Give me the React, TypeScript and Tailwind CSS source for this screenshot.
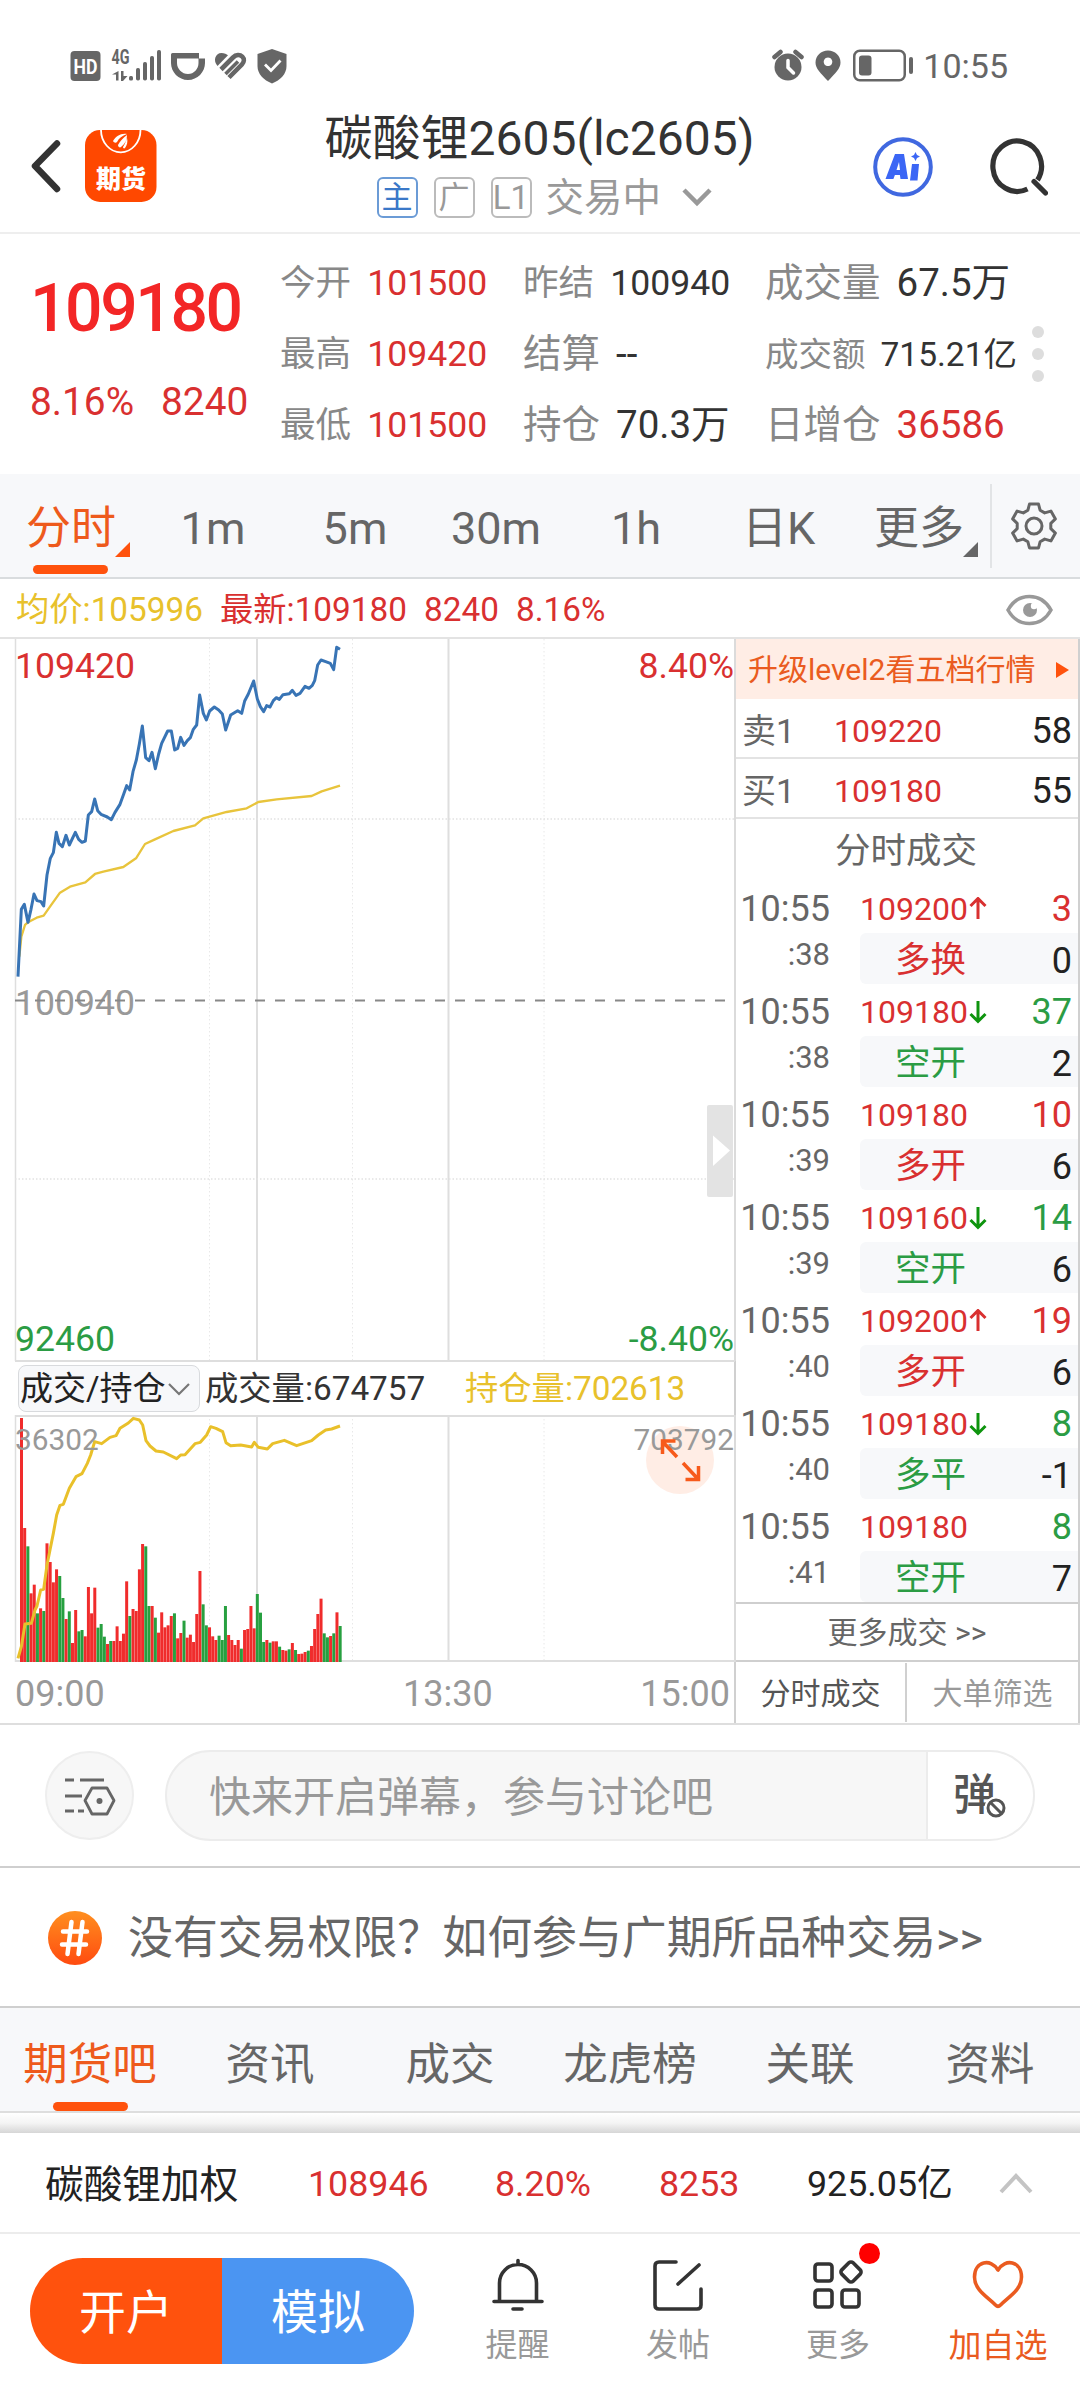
import React from 'react';
import clsx from 'clsx';

const stats = [
  [
    { label: '今开', value: '101500', up: true },
    { label: '最高', value: '109420', up: true },
    { label: '最低', value: '101500', up: true },
  ],
  [
    { label: '昨结', value: '100940' },
    { label: '结算', value: '--', size: 'big' },
    { label: '持仓', value: '70.3万', size: 'big' },
  ],
  [
    { label: '成交量', value: '67.5万', size: 'big' },
    { label: '成交额', value: '715.21亿', size: 'small' },
    { label: '日增仓', value: '36586', up: true, size: 'big' },
  ],
];

const trades = [
  { sec: ':38', price: '109200', dir: 'up', vol: '3', volUp: true, type: '多换', typeUp: true, delta: '0' },
  { sec: ':38', price: '109180', dir: 'down', vol: '37', volUp: false, type: '空开', typeUp: false, delta: '2' },
  { sec: ':39', price: '109180', dir: '', vol: '10', volUp: true, type: '多开', typeUp: true, delta: '6' },
  { sec: ':39', price: '109160', dir: 'down', vol: '14', volUp: false, type: '空开', typeUp: false, delta: '6' },
  { sec: ':40', price: '109200', dir: 'up', vol: '19', volUp: true, type: '多开', typeUp: true, delta: '6' },
  { sec: ':40', price: '109180', dir: 'down', vol: '8', volUp: false, type: '多平', typeUp: false, delta: '-1' },
  { sec: ':41', price: '109180', dir: '', vol: '8', volUp: false, type: '空开', typeUp: false, delta: '7' },
];

const boardTabs = ['期货吧', '资讯', '成交', '龙虎榜', '关联', '资料'];

// Chart series are stored at 3x plot resolution
const priceLine =
  '54,1220 64,1018 73,1003 84,1057 93,1018 102,972 111,992 123,995 131,1008 141,915 151,865 160,848 169,787 177,820 187,830 198,796 208,825 226,787 236,808 246,817 256,813 265,735 275,725 284,687 293,722 303,733 322,741 334,749 345,727 360,703 372,670 380,647 389,660 399,605 409,570 418,522 427,468 437,563 447,572 456,547 466,596 476,552 485,520 503,483 514,483 524,540 533,535 542,502 552,526 562,512 571,503 580,478 590,465 599,375 610,430 619,450 629,423 643,411 656,420 667,432 677,480 692,435 713,422 725,430 734,393 745,372 761,333 772,387 781,410 791,425 800,407 810,411 820,392 829,383 838,388 849,374 868,371 877,361 888,376 900,370 915,349 927,355 937,346 944,332 953,285 963,270 977,275 991,280 1001,299 1010,232 1020,238';

const averageLine =
  '58,1160 64,1100 75,1065 84,1057 110,1043 131,1037 150,1010 180,968 210,950 256,937 285,912 310,905 370,891 408,865 435,822 465,808 520,783 585,766 610,745 680,726 740,715 775,696 830,688 935,678 965,664 1020,647';

const positionLine =
  '54,1015 64,980 75,912 94,910 105,870 111,858 122,810 131,808 141,735 150,690 160,640 170,585 180,556 190,553 208,505 228,470 246,461 262,430 272,405 284,365 305,371 330,352 348,347 360,325 385,309 400,295 418,300 428,315 438,362 450,378 468,393 490,396 530,416 542,405 555,404 585,371 601,367 620,345 632,320 648,325 668,335 678,368 692,377 722,375 755,381 763,367 775,382 802,387 818,371 853,361 890,377 935,362 955,345 977,330 995,327 1020,318';

const volumeBars =
  '294R 624R 679G 820R 794R 880G 865R 873G 670R 726R 787R 748R 768G 834G 897R 874G 969R 870R 934G 930G 949R 801R 880R 803R 923G 912G 950G 972R 963G 963R 919R 963R 941R 784R 888G 867R 873R 748R 672R 679G 858G 858R 893G 938R 877R 922R 916R 888R 880G 955R 939R 902G 953R 944R 966R 882R 753R 853G 916G 922R 949R 960R 947G 960G 858G 945R 960R 975R 960R 986G 930R 927R 858R 925R 822G 878G 966G 960R 968G 964R 964R 980G 990R 992R 988G 969R 990G 1002R 1001R 996R 992G 978R 927R 882R 836R 940G 952G 948R 940G 877R 918G'
    .split(' ')
    .map((bar) => ({ top: parseInt(bar, 10), up: bar.endsWith('R') }));

const StatusBar = () => (
  <div className="flex h-[105px] items-start justify-between pt-[49px] pl-[70px] pr-[72px] text-[#666]">
    <svg className="overflow-visible" width="218" height="34" viewBox="70 49 218 34" fill="currentColor">
      <rect x="70.5" y="51" width="30" height="30" rx="4" />
      <text x="85.5" y="73.5" fontSize="20" fontWeight="700" fill="#fff" textAnchor="middle" textLength="24" lengthAdjust="spacingAndGlyphs">HD</text>
      <text x="111.500" y="63.500" fontSize="19.500" fontWeight="700" textLength="18" lengthAdjust="spacingAndGlyphs">4G</text>
      <path d="M118.500 71v9.500h-2.500v-6h-4zM121 71h2.500v5h4l-4.500 5h-2z" />
      <rect x="129" y="76" width="4" height="4.500" rx="1.500" />
      <rect x="136" y="68" width="4" height="12.500" rx="1.800" />
      <rect x="143" y="62" width="4" height="18.500" rx="1.800" />
      <rect x="150" y="56" width="4" height="24.500" rx="1.800" />
      <rect x="157" y="50" width="4" height="30.500" rx="1.800" />
      <path fillRule="evenodd" d="M172.500 53H199v5.500h6V63c0 9-7.500 17-17 17s-17-8-17-17v-8.500q0-1.500 1.500-1.500zM177 58.500V63c0 6 5 11 11 11s10.500-5 10.500-11v-4.500z" />
      <path d="M217.500 66c-5-5.500-2-13 4-13 3 0 5 1 6.500 2.300z" />
      <g fill="none" stroke="currentColor">
        <path d="M221 69.500L233 57.500c3-3 7-3 9.300-.8 2.200 2.200 2 5.300-.3 7.600L229 77.500" strokeWidth="4.600" />
        <path d="M225.500 74L238 61.500" strokeWidth="3.600" />
      </g>
      <path d="M272 49l14.500 5v12c0 8-6 14-14.500 17.500-8.500-3.500-14.500-9.500-14.500-17.500V54z" />
      <path d="M265 64.500l6 6 9.500-10" fill="none" stroke="#fff" strokeWidth="2.800" />
    </svg>
    <div className="flex items-center">
      <svg width="142" height="34" viewBox="774 49 142 34" fill="currentColor">
        <circle cx="790" cy="67" r="13.500" />
        <path d="M776.500 57l6-5M797.500 52l6 5" stroke="currentColor" strokeWidth="4.500" strokeLinecap="round" />
        <path d="M790 60.500v7l5.500 5.500" fill="none" stroke="#fff" strokeWidth="3.500" strokeLinecap="round" />
        <path fillRule="evenodd" d="M830 50.500c7 0 12.500 5 12.500 12 0 6-5 10.500-12.500 18.500-7.500-8-12.500-12.500-12.500-18.500 0-7 5.500-12 12.500-12zM830 57.500a4.300 4.300 0 1 0 .01 0z" />
        <rect x="856.250" y="50.750" width="50.500" height="29.500" rx="5.500" fill="none" stroke="currentColor" strokeWidth="2.500" />
        <rect x="861" y="55.500" width="12.500" height="20" rx="3" />
        <rect x="911" y="57" width="4" height="17" rx="2" />
      </svg>
      <span className="ml-[9px] text-[34px] leading-none">10:55</span>
    </div>
  </div>
);

const Header = () => (
  <header className="relative flex h-[129px] items-start justify-between border-b-2 border-[#eee] text-[#333]">
    <div className="flex items-center gap-[23px] pl-[30px] pt-[24px]">
      <svg width="32" height="56" viewBox="0 0 32 56" fill="none" stroke="currentColor" strokeWidth="6.500" strokeLinecap="round" strokeLinejoin="round">
        <path d="M27 5.500L5 28l22 23" />
      </svg>
      <svg width="72" height="74" viewBox="0 0 72 74">
        <rect y="1" width="71.500" height="72" rx="15" fill="#ff4800" />
        <path d="M16 1a19.500 22 0 0 0 39.500 0" fill="none" stroke="#fff" strokeWidth="1.800" />
        <path d="M28 12c3-5 8-8 14-7-5 2-8 4-10 8-1 1-3 1-4-1zM33 16c2-4 5-7 9-10 0 5-2 9-6 12-1 1-3 0-3-2zM38 18c2-3 3-6 4-9 1 4 0 7-2 10-1 1-2 0-2-1z" fill="#fff" />
        <text x="36" y="58.500" fontSize="25" fontWeight="900" fill="#fff" textAnchor="middle">期货</text>
      </svg>
    </div>
    <div className="absolute left-[324px] top-[10px] flex w-[431px] flex-col items-center">
      <h1 className="text-[48px] leading-[48px] whitespace-nowrap">碳酸锂2605(lc2605)</h1>
      <div className="mt-[11px] flex h-[46px] w-[340px] items-center gap-[16px]">
        <span className="ml-[7px] flex h-[41px] w-[41px] shrink-0 items-center justify-center rounded-[6px] border-2 border-[#6b9bd6] text-[31px] leading-none text-[#3a78c8]">主</span>
        <span className="flex h-[41px] w-[41px] shrink-0 items-center justify-center rounded-[6px] border-2 border-[#bbb] text-[31px] leading-none text-[#999]">广</span>
        <span className="flex h-[41px] w-[41px] shrink-0 items-center justify-center rounded-[6px] border-2 border-[#bbb] text-[33px] leading-none text-[#999]">L1</span>
        <span className="-ml-[2px] shrink-0 pt-[3px] text-[38.500px] leading-none whitespace-nowrap text-[#999]">交易中</span>
        <svg className="ml-[4px] shrink-0" width="32" height="20" viewBox="0 0 32 20" fill="none" stroke="#999" strokeWidth="4.500">
          <path d="M3 3l13 13L29 3" />
        </svg>
      </div>
    </div>
    <div className="flex items-center gap-[56px] pr-[32px] pt-[31px]">
      <svg width="62" height="62" viewBox="0 0 62 62">
        <circle cx="31" cy="31" r="27.800" fill="none" stroke="#4068e0" strokeWidth="4" />
        <g fill="#3b66f5">
          <path fillRule="evenodd" d="M23 18h9l4 25h-7.500l-.6-4h-5l-1.500 4H13.500zM27 26l-2.500 8h3.500z" />
          <path d="M40 28h7l-1.500 16.500H38z" />
          <path d="M43.500 16l1.500 3 3 1.500-3 1.500-1.500 3-1.500-3-3-1.500 3-1.500z" />
        </g>
      </svg>
      <svg width="58" height="62" viewBox="0 0 58 62" fill="none" stroke="currentColor" strokeWidth="5.200" strokeLinecap="round">
        <path d="M37.500 53a24.300 25.200 0 1 1 10-9" strokeLinecap="butt" />
        <path d="M44 45.500L55.500 57" />
      </svg>
    </div>
  </header>
);

const Quote = () => (
  <section className="flex h-[240px] items-start">
    <div className="w-[280px] pl-[30px]">
      <div className="mt-[42px] text-[66px] leading-[66px] font-medium tracking-[-2.4px] text-[#f32626]">109180</div>
      <div className="mt-[40px] flex gap-[27px] text-[38.800px] leading-[40px] text-[#d93030]">
        <span>8.16%</span>
        <span>8240</span>
      </div>
    </div>
    {stats.map((column, i) => (
      <div key={i} className={clsx('mt-[14px] flex flex-col', i === 0 && 'w-[243px]', i === 1 && 'w-[242px]', i === 2 && 'w-[262px]')}>
        {column.map((item) => (
          <div
            key={item.label}
            className={clsx(
              'flex h-[71px] items-center whitespace-nowrap leading-none',
              item.size === 'big' && 'gap-[16px] text-[38.5px]',
              item.size === 'small' && 'gap-[15px] text-[33.5px]',
              !item.size && 'gap-[16px] text-[35.6px]'
            )}
          >
            <span className="text-[#888]">{item.label}</span>
            <span className={item.up ? 'text-[#d93030]' : 'text-[#333]'}>{item.value}</span>
          </div>
        ))}
      </div>
    ))}
    <div className="mt-[92px] flex flex-col gap-[10px] pl-[5px]">
      <i className="h-[12px] w-[12px] rounded-full bg-[#ddd]" />
      <i className="h-[12px] w-[12px] rounded-full bg-[#ddd]" />
      <i className="h-[12px] w-[12px] rounded-full bg-[#ddd]" />
    </div>
  </section>
);

const PeriodTabs = () => (
  <nav className="flex h-[105px] border-b-2 border-[#d9dcde] bg-[#f7f8fa] text-[45px] leading-none text-[#666]">
    <div className="relative w-[142px] pl-[26px] pt-[32px] whitespace-nowrap text-[#ee5a1c]">
      分时
      <svg className="absolute left-[115px] top-[68px]" width="15" height="15" viewBox="0 0 15 15">
        <path d="M15 0v15H0z" fill="#ff520d" />
      </svg>
      <i className="absolute left-[33px] top-[91px] h-[9px] w-[75px] rounded-full bg-[#ff520d]" />
    </div>
    <span className="w-[142px] pt-[32px] text-center">1m</span>
    <span className="w-[142px] pt-[32px] text-center">5m</span>
    <span className="w-[140px] pt-[32px] text-center">30m</span>
    <span className="w-[140px] pt-[32px] text-center">1h</span>
    <span className="w-[145px] pt-[32px] text-center">日K</span>
    <div className="relative w-[139px] pl-[23px] pt-[32px] whitespace-nowrap">
      更多
      <svg className="absolute left-[112px] top-[68px]" width="15" height="15" viewBox="0 0 15 15">
        <path d="M15 0v15H0z" fill="#666" />
      </svg>
    </div>
    <div className="mt-[10px] flex h-[84px] flex-1 items-center justify-center border-l-2 border-[#e2e4e6] pr-[4px]">
      <svg width="50" height="50" viewBox="0 0 50 50" fill="none" stroke="#666" strokeWidth="3" strokeLinejoin="round">
        <path d="M20.500 3h9l1.600 6.200 4.600 2.700 6.200-1.800 4.500 7.800-4.600 4.400v5.400l4.600 4.400-4.500 7.800-6.200-1.800-4.600 2.700L29.500 47h-9l-1.600-6.200-4.600-2.700-6.200 1.800-4.500-7.800 4.600-4.400v-5.400l-4.600-4.400 4.500-7.800 6.200 1.800 4.600-2.700z" />
        <circle cx="25" cy="25" r="8" />
      </svg>
    </div>
  </nav>
);

const PriceInfo = () => (
  <div className="flex h-[60px] items-center border-b-2 border-[#e3e3e3] pl-[16px] pr-[26px] pt-[3px] text-[33.300px] leading-none text-[#d93030]">
    <span className="w-[204px] text-[#e8c12c]">均价:105996</span>
    <span className="w-[204px]">最新:109180</span>
    <span className="w-[92px]">8240</span>
    <span>8.16%</span>
    <svg className="ml-auto" width="49" height="32" viewBox="0 0 49 32">
      <path d="M3 16C13-2 36-2 46 16 36 34 13 34 3 16z" fill="none" stroke="#999" strokeWidth="3.500" />
      <circle cx="25" cy="16" r="7" fill="#999" />
      <circle cx="29" cy="12" r="3.200" fill="#fff" />
    </svg>
  </div>
);

const Grid = ({ bottom }: { bottom: number }) => (
  <g fill="none" stroke="#dedede" strokeWidth="2">
    <path d={`M15.500 0V${bottom}M735 0V${bottom}`} strokeWidth="1.500" />
    <path d={`M257 0V${bottom}M448.500 0V${bottom}`} />
    <path d={`M209.500 0V${bottom}M352.500 0V${bottom}M544 0V${bottom}`} stroke="#e8e8e8" strokeWidth="1" strokeDasharray="1.500 2.500" />
  </g>
);

const Charts = () => (
  <div className="w-[736px] border-r-2 border-[#d0d0d0]">
    <svg className="block" width="736" height="723" viewBox="0 0 736 723">
      <Grid bottom={722} />
      <path d="M15 180H735M15 540H735" stroke="#e2e2e2" strokeWidth="1.500" strokeDasharray="1.500 2" />
      <path d="M15 722H735" stroke="#dedede" strokeWidth="2" />
      <g fontSize="35.600">
        <text x="15" y="39" fill="#d93030">109420</text>
        <text x="734" y="39" fill="#d93030" textAnchor="end">8.40%</text>
        <text x="15" y="376" fill="#999">100940</text>
        <text x="15" y="712" fill="#2b9c44">92460</text>
        <text x="734" y="712" fill="#2b9c44" textAnchor="end">-8.40%</text>
      </g>
      <path d="M15 361.500H727" stroke="#888" strokeWidth="2" strokeDasharray="10 10" />
      <g transform="translate(0 -69) scale(.33333)" fill="none" strokeLinejoin="round">
        <polyline points={averageLine} stroke="#e8c43c" strokeWidth="7" />
        <polyline points={priceLine} stroke="#3874b5" strokeWidth="9" />
      </g>
      <rect x="707" y="466" width="26" height="92" rx="2" fill="#e3e3e3" />
      <path d="M713 496.500l17 15-17 15.500z" fill="#fff" />
    </svg>
    <div className="flex h-[53px] items-center pl-[18px] text-[33.300px] leading-none whitespace-nowrap text-[#333]">
      <div className="flex h-[47px] w-[182px] items-center rounded-[8px] border border-[#d8dadd] bg-[#f7f8fa] pl-px text-[33px] text-[#222]">
        成交/持仓
        <svg className="ml-[2px]" width="22" height="14" viewBox="0 0 22 14" fill="none" stroke="#777" strokeWidth="2.200">
          <path d="M1 2l10 10L21 2" />
        </svg>
      </div>
      <span className="ml-[5px] w-[260px]">成交量:674757</span>
      <span className="text-[#e8c12c]">持仓量:702613</span>
    </div>
    <svg className="block" width="736" height="248" viewBox="0 0 736 248">
      <Grid bottom={247} />
      <path d="M15 1H735M15 246H735" stroke="#dedede" strokeWidth="2" />
      <circle cx="680" cy="45" r="34" fill="#ffede5" />
      <g transform="translate(0 -95) scale(.33333)">
        {volumeBars.map((bar, i) => (
          <rect key={i} x={60 + i * 9.56} y={bar.top} width="9" height={1026 - bar.top} fill={bar.up ? '#f02c2c' : '#27a040'} />
        ))}
        <polyline points={positionLine} fill="none" stroke="#e9c02a" strokeWidth="9" strokeLinejoin="round" />
      </g>
      <g fontSize="29.800" fill="#999">
        <text x="15" y="35">36302</text>
        <text x="734" y="35" textAnchor="end">703792</text>
      </g>
      <g fill="none" stroke="#f75a1b" strokeWidth="3.500">
        <path d="M677 42l-15-16M662.500 39V26h13M683 48l15 16M698.500 51v13.500h-13" />
      </g>
    </svg>
    <div className="flex h-[60px] items-center pl-[15px] pr-[4px] pt-px text-[36px] leading-none text-[#999]">
      <span className="w-[388px]">09:00</span>
      <span>13:30</span>
      <span className="ml-auto">15:00</span>
    </div>
  </div>
);

const Arrow = ({ dir }: { dir: string }) => (
  <svg className="ml-px" width="18" height="24" viewBox="0 0 18 24" fill="none" stroke={dir === 'up' ? '#d93030' : '#0e940e'} strokeWidth="3">
    {dir === 'up' ? <path d="M9 22V2M1.500 9L9 1.500 16.500 9" /> : <path d="M9 1v20M1.500 14L9 21.500l7.500-7.500" />}
  </svg>
);

const OrderBook = () => (
  <aside className="flex w-[344px] flex-col border-r-2 border-[#d0d0d0] leading-none">
    <div className="flex h-[60px] items-center justify-between bg-[#ffede5] pl-[12px] pr-[9px] pt-[2px] text-[30px] whitespace-nowrap text-[#ea5b20]">
      升级level2看五档行情
      <svg width="13" height="16" viewBox="0 0 13 16">
        <path d="M0 0l13 8-13 8z" fill="#ff520d" />
      </svg>
    </div>
    {[['卖1', '109220', '58'], ['买1', '109180', '55']].map(([side, price, size]) => (
      <div key={side} className="flex h-[60px] items-center border-b-2 border-[#e3e3e3] pl-[6px] pr-[6px] pt-[5px] text-[36px] text-[#222]">
        <span className="w-[92px] text-[34px] text-[#666]">{side}</span>
        <span className="text-[32px] text-[#d93030]">{price}</span>
        <span className="ml-auto">{size}</span>
      </div>
    ))}
    <div className="flex h-[62px] items-center justify-center pt-[3px] pr-[2px] text-[35.500px] text-[#666]">分时成交</div>
    {trades.map((t, i) => (
      <div key={i} className="flex h-[103px] text-[36px]">
        <div className="flex w-[124px] flex-col items-end pr-[30px] pt-[10px] text-[#666]">
          <span>10:55</span>
          <span className="mt-[12px] text-[31px]">{t.sec}</span>
        </div>
        <div className="flex-1">
          <div className="flex h-[52px] items-center pr-[6px] pt-[4px]">
            <span className="text-[32px] text-[#d93030]">{t.price}</span>
            {t.dir && <Arrow dir={t.dir} />}
            <span className={clsx('ml-auto', t.volUp ? 'text-[#d93030]' : 'text-[#2b9c44]')}>{t.vol}</span>
          </div>
          <div className="flex h-[51px] items-center rounded-l-[6px] bg-[#f7f8fa] pl-[35px] pr-[6px] pt-[5px]">
            <span className={clsx('text-[35.500px]', t.typeUp ? 'text-[#d93030]' : 'text-[#2b9c44]')}>{t.type}</span>
            <span className="ml-auto text-[#222]">{t.delta}</span>
          </div>
        </div>
      </div>
    ))}
    <div className="flex h-[60px] items-center justify-center border-y-2 border-[#cfcfcf] pt-[2px] text-[30px] text-[#666]">更多成交 &gt;&gt;</div>
    <div className="flex h-[60px] pt-px text-[30px]">
      <span className="flex w-1/2 items-center justify-center border-r-2 border-[#d0d0d0] pt-[2px] text-[#555]">分时成交</span>
      <span className="flex w-1/2 items-center justify-center pt-[2px] text-[#999]">大单筛选</span>
    </div>
  </aside>
);

const DanmakuBar = () => (
  <div className="flex h-[145px] items-center gap-[31px] border-y-2 border-t-[#dedede] border-b-[#cfcfcf] px-[45px]">
    <div className="flex h-[89px] w-[89px] items-center justify-center rounded-full border-2 border-[#eee] bg-[#f7f7f7]">
      <svg width="52" height="40" viewBox="0 0 52 40" fill="none" stroke="#666" strokeWidth="2.800">
        <path d="M1 4h9M16 4h24M1 20h17M1 35h9M14 35h6" />
        <path d="M28 12h15l7 12.500L43 38H28l-7-13.500z" strokeLinejoin="round" />
        <circle cx="35.500" cy="25" r="3" fill="#666" stroke="none" />
      </svg>
    </div>
    <div className="flex h-[91px] w-[870px] overflow-hidden rounded-full border-2 border-[#ececec] bg-[#f7f7f7]">
      <span className="flex flex-1 items-center pl-[42px] pt-[4px] text-[42px] leading-none text-[#999]">快来开启弹幕，参与讨论吧</span>
      <div className="relative w-[107px] border-l-2 border-[#ececec] bg-white pl-[25px] pt-[22px] text-[43px] leading-none font-medium text-[#555]">
        弹
        <svg className="absolute left-[56px] top-[44px]" width="24" height="24" viewBox="0 0 24 24">
          <circle cx="12" cy="12" r="11.500" fill="#fff" />
          <circle cx="12" cy="12" r="8" fill="none" stroke="#555" strokeWidth="3" />
          <path d="M6.500 6.500l11 11" stroke="#555" strokeWidth="3" />
        </svg>
      </div>
    </div>
  </div>
);

const TopicRow = () => (
  <div className="flex h-[140px] items-center border-b-2 border-[#cfcfcf] pl-[48px] pt-[2px] text-[45px] leading-none whitespace-nowrap text-[#666]">
    <svg width="54" height="54" viewBox="0 0 54 54">
      <defs>
        <linearGradient id="topic" x1="0" y1="0" x2="0" y2="1">
          <stop offset="0" stopColor="#ff8f1f" />
          <stop offset="1" stopColor="#ff4b10" />
        </linearGradient>
      </defs>
      <circle cx="27" cy="27" r="27" fill="url(#topic)" />
      <path d="M23.500 11l-4 32M34.500 11l-4 32M15 20.500h24M14 33.500h24" stroke="#fff" strokeWidth="4.500" strokeLinecap="round" />
    </svg>
    <span className="ml-[26px] pt-[2px] text-[44.900px]">没有交易权限？如何参与广期所品种交易&gt;&gt;</span>
  </div>
);

const BoardTabs = () => (
  <nav className="flex h-[105px] border-b-2 border-[#dedede] bg-[#f7f8fa] text-[44.5px] leading-none text-[#666]">
    {boardTabs.map((tab, i) => (
      <div key={tab} className={clsx('relative w-[180px] pt-[35px] text-center', i === 0 && 'text-[#ee5a1c]')}>
        {tab}
        {i === 0 && <i className="absolute left-[53px] top-[94px] h-[9px] w-[75px] rounded-full bg-[#ff520d]" />}
      </div>
    ))}
  </nav>
);

const IndexRow = () => (
  <>
    <div className="h-[20px] bg-linear-to-b from-white via-[#f4f4f4] to-[#d6d6d6]" />
    <div className="flex h-[101px] items-center border-b-2 border-[#ececec] pl-[45px] pt-[5px] text-[35.800px] leading-none whitespace-nowrap text-[#d93030]">
      <span className="w-[263px] text-[38.700px] text-[#222]">碳酸锂加权</span>
      <span className="w-[187px]">108946</span>
      <span className="w-[164px]">8.20%</span>
      <span className="w-[148px]">8253</span>
      <span className="w-[192px] text-[#222]">925.05亿</span>
      <svg className="-mt-[4px]" width="34" height="22" viewBox="0 0 34 22" fill="none" stroke="#c4c4c4" strokeWidth="4">
        <path d="M2 20L17 4l15 16" />
      </svg>
    </div>
  </>
);

const BottomBar = () => (
  <footer className="flex h-[154px] items-start text-[32px] leading-none text-[#999]">
    <div className="ml-[30px] mt-[24px] flex h-[106px] w-[384px] overflow-hidden rounded-full text-[47px] text-white">
      <span className="flex w-1/2 items-center justify-center bg-[#ff520d] pt-[3px]">开户</span>
      <span className="flex w-1/2 items-center justify-center bg-[#4b95f2] pt-[3px]">模拟</span>
    </div>
    <div className="ml-[23px] flex w-[161px] flex-col items-center pt-[24px]">
      <svg width="54" height="56" viewBox="0 0 54 56" fill="none" stroke="#333" strokeWidth="3.600" strokeLinecap="round">
        <path d="M8.500 43.500V25a18.500 18.500 0 0 1 37 0v18.500M3 43.500h48M27 2.500v4M22 51h9" />
      </svg>
      <span className="mt-[15px]">提醒</span>
    </div>
    <div className="flex w-[160px] flex-col items-center pt-[24px]">
      <svg width="54" height="56" viewBox="0 0 54 56" fill="none" stroke="#333" strokeWidth="3.600" strokeLinecap="round">
        <path d="M25 4H8q-4 0-4 4v39q0 4 4 4h38q4 0 4-4V31M27 26L48 7" />
      </svg>
      <span className="mt-[15px]">发帖</span>
    </div>
    <div className="relative flex w-[160px] flex-col items-center pt-[24px]">
      <svg width="54" height="56" viewBox="0 0 54 56" fill="none" stroke="#333" strokeWidth="3.600">
        <rect x="4" y="6" width="17" height="17" rx="3" />
        <rect x="4" y="32" width="17" height="17" rx="3" />
        <rect x="31" y="32" width="17" height="17" rx="3" />
        <rect x="32" y="6" width="16" height="16" rx="3" transform="rotate(45 40 14)" />
      </svg>
      <span className="mt-[15px]">更多</span>
      <i className="absolute left-[101px] top-[9px] h-[21px] w-[21px] rounded-full bg-[#ff0000]" />
    </div>
    <div className="flex w-[160px] flex-col items-center pt-[24px] text-[#ea5b20]">
      <svg width="54" height="56" viewBox="0 0 54 56" fill="none" stroke="currentColor" strokeWidth="3.600" strokeLinejoin="round">
        <path d="M27 12C20 0 3.500 3 3.500 19c0 13 13 20 21 28q2.500 2.500 5 0c8-8 21-15 21-28C50.500 3 34 0 27 12z" />
      </svg>
      <span className="mt-[15px] text-[33px]">加自选</span>
    </div>
  </footer>
);

const App: React.FC = () => {
  return (
    <div className="h-[2388px] w-[1080px] overflow-hidden bg-white font-['Roboto','Noto_Sans_CJK_SC',sans-serif]">
      <StatusBar />
      <Header />
      <Quote />
      <PeriodTabs />
      <PriceInfo />
      <main className="flex h-[1084px]">
        <Charts />
        <OrderBook />
      </main>
      <DanmakuBar />
      <TopicRow />
      <BoardTabs />
      <IndexRow />
      <BottomBar />
    </div>
  );
};

export default App;
